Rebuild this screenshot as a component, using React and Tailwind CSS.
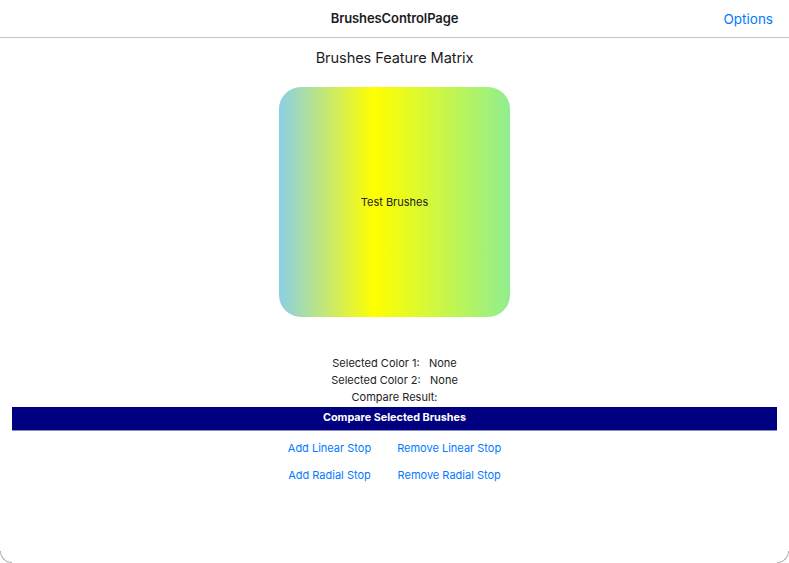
const LinkButton = ({ children }) => (
  <button className="text-[11px] leading-[14px] text-[#007aff] whitespace-nowrap">{children}</button>
);

const App = () => {
  return (
    <div className="relative h-[563px] w-[789px] bg-white overflow-hidden font-['Inter',sans-serif] text-[#1c1c1e]">
      {/* Barra de navegación */}
      <header className="relative h-[38px] flex items-center justify-center border-b border-[#c6c6c8]">
        <h1 className="text-[13px] font-semibold tracking-[-0.1px]">BrushesControlPage</h1>
        <span className="absolute right-[16px] top-[9px] text-[13.5px] text-[#007aff]">Options</span>
      </header>

      <main className="flex flex-col items-center">
        <h2 className="mt-[9px] text-[14.6px] leading-[22px] tracking-[-0.1px]">Brushes Feature Matrix</h2>

        <div className="mt-[18px] h-[230px] w-[231px] rounded-[22px] flex items-center justify-center bg-[linear-gradient(to_right,#8bd0e6_0%,#ffff00_41%,#e8fb20_55%,#90ee90_100%)]">
          <span className="text-[11px] text-[#222]">Test Brushes</span>
        </div>

        <div className="mt-[38px] flex flex-col items-center text-[11px] leading-[17px] text-[#222]">
          <p className="whitespace-pre">Selected Color 1:   None</p>
          <p className="whitespace-pre">Selected Color 2:   None</p>
          <p>Compare Result:</p>
        </div>

        <div className="mt-[1px] self-stretch mx-[12px] h-[24px] bg-[#000080] border-b border-[#8a8ac0] flex items-center justify-center">
          <span className="text-[10.8px] font-bold text-white">Compare Selected Brushes</span>
        </div>

        <div className="mt-[10px] grid grid-cols-[auto_auto] gap-x-[26px] gap-y-[13px]">
          <LinkButton>Add Linear Stop</LinkButton>
          <LinkButton>Remove Linear Stop</LinkButton>
          <LinkButton>Add Radial Stop</LinkButton>
          <LinkButton>Remove Radial Stop</LinkButton>
        </div>
      </main>

      {/* Esquinas redondeadas de la ventana */}
      <div className="absolute bottom-0 left-0 h-[12px] w-[12px] border-l border-b border-[#b0b0b0] rounded-bl-[12px]" />
      <div className="absolute bottom-0 right-0 h-[12px] w-[12px] border-r border-b border-[#b0b0b0] rounded-br-[12px]" />
    </div>
  );
};

export default App;
